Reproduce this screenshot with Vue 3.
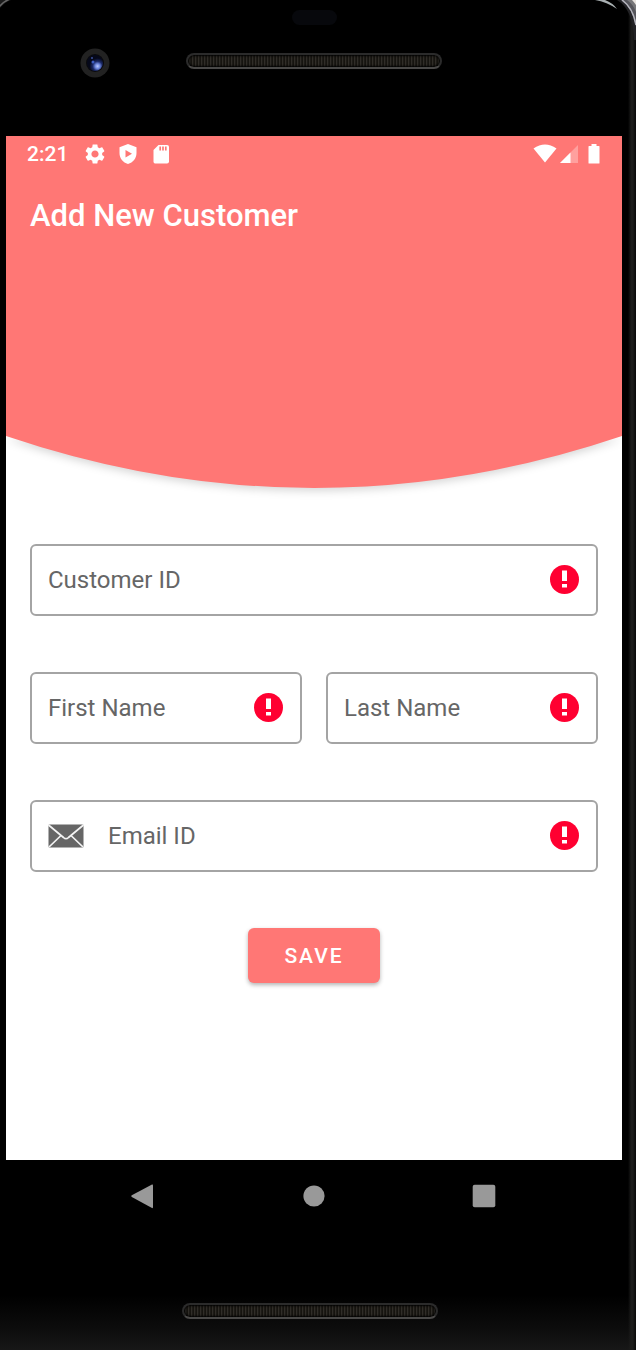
<script setup>
import { reactive } from 'vue'

const form = reactive({ customerId: '', firstName: '', lastName: '', email: '' })

const fields = [
  { key: 'customerId', label: 'Customer ID', type: 'text', wide: true },
  { key: 'firstName', label: 'First Name', type: 'text', wide: false },
  { key: 'lastName', label: 'Last Name', type: 'text', wide: false },
  { key: 'email', label: 'Email ID', type: 'email', wide: true, mail: true },
]
</script>

<template>
  <div class="phone">
    <svg class="corner left" viewBox="0 0 24 36" aria-hidden="true">
      <path d="M0 0H11Q5 2 0 8Z" fill="#1c1c1c" />
      <path d="M-1 7Q4 1 10 -1" fill="none" stroke="#666" stroke-width="1.5" />
    </svg>
    <svg class="corner right" viewBox="0 0 60 40" aria-hidden="true">
      <path d="M19 0H29Q37 3 41 9Q31 2 19 0Z" fill="#a9b0b2" />
      <path d="M41 0Q57 9 58 40H60V0Z" fill="#222225" />
      <path d="M45 0H60V26Q56 7 45 0Z" fill="#55555b" />
      <path d="M46 0Q57 8 60 25" fill="none" stroke="#b5b5bd" stroke-width="1.5" />
      <path d="M51 0H60V12Q57 4 51 0Z" fill="#77777a" />
      <path d="M56 0H60V5Q58 2 56 0Z" fill="#e8e4df" />
    </svg>

    <div class="bezel top">
      <svg class="camera" viewBox="0 0 30 30" aria-hidden="true">
        <defs>
          <radialGradient id="glint" cx="0.66" cy="0.7" r="0.5">
            <stop offset="0" stop-color="#bccbff" />
            <stop offset="0.3" stop-color="#6d86dc" />
            <stop offset="0.6" stop-color="#1c2a68" />
            <stop offset="1" stop-color="#05081a" />
          </radialGradient>
        </defs>
        <circle cx="15" cy="15" r="14.5" fill="#222" />
        <circle cx="15" cy="15" r="9" fill="#0a0a0c" />
        <circle cx="15" cy="15" r="8" fill="url(#glint)" />
        <circle cx="13" cy="14" r="1.5" fill="#3d5dc0" />
        <circle cx="12" cy="10" r="1" fill="#3a4f9a" />
      </svg>
      <div class="sensor"></div>
      <div class="speaker"></div>
    </div>

    <main class="screen">
      <header class="header">
        <div class="status">
          <span class="time">2:21</span>
          <svg class="sicon" viewBox="2 2 20 20" aria-hidden="true">
            <path fill="#fff" d="M19.14 12.94c.04-.3.06-.61.06-.94 0-.32-.02-.64-.07-.94l2.03-1.58c.18-.14.23-.41.12-.61l-1.92-3.32c-.12-.22-.37-.29-.59-.22l-2.39.96c-.5-.38-1.03-.7-1.62-.94l-.36-2.54c-.04-.24-.24-.41-.48-.41h-3.84c-.24 0-.43.17-.47.41l-.36 2.54c-.59.24-1.13.57-1.62.94l-2.39-.96c-.22-.08-.47 0-.59.22L2.74 8.87c-.12.21-.08.47.12.61l2.03 1.58c-.05.3-.09.63-.09.94s.02.64.07.94l-2.03 1.58c-.18.14-.23.41-.12.61l1.92 3.32c.12.22.37.29.59.22l2.39-.96c.5.38 1.03.7 1.62.94l.36 2.54c.05.24.24.41.48.41h3.84c.24 0 .44-.17.47-.41l.36-2.54c.59-.24 1.13-.56 1.62-.94l2.39.96c.22.08.47 0 .59-.22l1.92-3.32c.12-.22.07-.47-.12-.61l-2.01-1.58zM12 15.6c-1.98 0-3.6-1.62-3.6-3.6s1.62-3.6 3.6-3.6 3.6 1.62 3.6 3.6-1.62 3.6-3.6 3.6z" />
          </svg>
          <svg class="sicon" viewBox="0 0 20 20" aria-hidden="true">
            <path fill="#fff" fill-rule="evenodd" d="M10 0L18.500 3.200V9C18.500 14.500 15 18.500 10 20C5 18.500 1.500 14.500 1.500 9V3.200ZM7.500 6V13.500L14 9.700Z" />
          </svg>
          <svg class="sicon" viewBox="0 0 20 20" aria-hidden="true">
            <path fill="#fff" d="M7.500 1H16Q18 1 18 3V17.500Q18 19.500 16 19.500H4Q2.500 19.500 2.500 17.500V6Z" />
            <path stroke="#ff7775" stroke-width="1.700" d="M9.200 2.500V6.500M12 2.500V6.500M14.800 2.500V6.500" />
          </svg>
          <span class="spacer"></span>
          <svg class="wifi" viewBox="0 0 24 20" aria-hidden="true">
            <path fill="#fff" d="M0.500 4.500Q12 -3.500 23.500 4.500L12 18.500Z" />
          </svg>
          <svg class="signal" viewBox="0 0 18 20" aria-hidden="true">
            <path fill="#fff" opacity="0.3" d="M0 19L18 1V19Z" />
            <path fill="#fff" d="M0 19L10.500 8.500V19Z" />
          </svg>
          <svg class="battery" viewBox="0 0 12 20" aria-hidden="true">
            <path fill="#fff" d="M3.500 0H8.500V2H11Q11.500 2 11.500 2.700V19Q11.500 19.500 11 19.500H1Q0.500 19.500 0.500 19V2.700Q0.500 2 1 2H3.500Z" />
          </svg>
        </div>
        <h1 class="title">Add New Customer</h1>
      </header>
      <svg class="curve" viewBox="0 0 616 52" preserveAspectRatio="none" aria-hidden="true">
        <path fill="#ff7775" d="M0 0H616Q308 104 0 0Z" />
      </svg>

      <form class="form" @submit.prevent>
        <div v-for="f in fields" :key="f.key" class="field" :class="{ wide: f.wide, filled: form[f.key] }">
          <svg v-if="f.mail" class="mail" viewBox="0 0 36 24" aria-hidden="true">
            <rect x="0.500" y="0.500" width="35" height="23" rx="1" fill="#666" />
            <path fill="none" stroke="#f4f4f4" stroke-width="1.700" d="M0.500 1L15.500 13.500Q18 16 20.500 13.500L35.500 1M1 23L13 11.500M35 23L23 11.500" />
          </svg>
          <div class="entry">
            <label :for="f.key">{{ f.label }}</label>
            <input :id="f.key" v-model="form[f.key]" :type="f.type" />
          </div>
          <svg class="alert" viewBox="0 0 30 30" aria-hidden="true">
            <circle cx="14.500" cy="14.500" r="14.500" fill="#ff0031" />
            <path fill="#fff" d="M12 5.500H17V16H12ZM12 19H17V22.500H12Z" />
          </svg>
        </div>
        <button class="save" type="submit">SAVE</button>
      </form>
    </main>

    <nav class="nav">
      <button type="button" aria-label="Back">
        <svg viewBox="0 0 24 24"><path fill="#999" d="M20 0.500Q21 0 21 1.500V23Q21 24.500 20 24L-0.200 13Q-1.500 12 -0.200 11.300Z" /></svg>
      </button>
      <button type="button" aria-label="Home">
        <svg viewBox="0 0 24 24"><circle cx="12" cy="12" r="10.600" fill="#999" /></svg>
      </button>
      <button type="button" aria-label="Recent apps">
        <svg viewBox="0 0 24 24"><rect x="0.700" y="0.700" width="22.600" height="22.600" rx="2" fill="#999" /></svg>
      </button>
    </nav>

    <div class="bezel bottom">
      <div class="speaker"></div>
    </div>
  </div>
</template>

<style>
body {
  background: #000;
}
</style>

<style scoped>
* {
  box-sizing: border-box;
}

.phone {
  position: relative;
  display: flex;
  flex-direction: column;
  min-height: 100vh;
  padding: 0 14px 0 6px;
  overflow: hidden;
  font-family: Roboto, "Liberation Sans", sans-serif;
  background:
    linear-gradient(to right, transparent, #1c1c1b 40%, #1c1c1b 60%, #080808) right / 8px 100% no-repeat,
    linear-gradient(to top, #181818, #0c0c0c 24px, transparent 56px),
    #000;
}

.corner {
  position: absolute;
  top: 0;
}

.corner.left {
  left: 0;
  width: 24px;
  height: 36px;
}

.corner.right {
  right: 0;
  width: 60px;
  height: 40px;
}

.bezel {
  position: relative;
  display: flex;
  flex-direction: column;
  align-items: center;
}

.top {
  height: 136px;
  padding-top: 10px;
  gap: 28px;
}

.bottom {
  flex: 1;
  padding: 71px 8px 32px 0;
}

.camera {
  position: absolute;
  left: 74px;
  top: 48px;
  width: 30px;
  height: 30px;
}

.sensor {
  width: 45px;
  height: 15px;
  border-radius: 8px;
  background: #07080c;
}

.speaker {
  width: 256px;
  height: 16px;
  border: 2px solid #2b2b2b;
  border-bottom-color: #4a4948;
  border-radius: 8px;
  background: repeating-linear-gradient(to right, #16140f 0 1px, #302d28 1px 2px, #1d1b17 2px 3px);
  box-shadow: inset 0 0 2px 1px #000;
}

.screen {
  min-height: 1024px;
  overflow: hidden;
  background: #fff;
}

.header {
  position: relative;
  z-index: 1;
  height: 300px;
  background: #ff7775;
  color: #fff;
}

.status {
  display: flex;
  align-items: center;
  height: 36px;
  padding: 0 22px 0 21px;
}

.time {
  margin-right: 17px;
  font-size: 21px;
  line-height: 24px;
  font-weight: 500;
}

.sicon {
  width: 20px;
  height: 20px;
  margin-right: 13px;
}

.spacer {
  flex: 1;
}

.wifi {
  width: 24px;
  height: 20px;
  margin-right: 3px;
}

.signal {
  width: 18px;
  height: 20px;
  margin-right: 10px;
}

.battery {
  width: 12px;
  height: 20px;
}

.title {
  margin: 26px 24px 0;
  font-size: 31px;
  line-height: 36px;
  font-weight: 500;
}

.curve {
  display: block;
  width: 100%;
  height: 52px;
  overflow: visible;
  filter: drop-shadow(0 3px 4px rgba(0, 0, 0, 0.16));
}

.form {
  display: grid;
  grid-template-columns: 1fr 1fr;
  gap: 56px 24px;
  padding: 56px 24px;
}

.field {
  display: flex;
  align-items: center;
  min-width: 0;
  height: 72px;
  padding: 0 16px;
  border: 2px solid #a4a4a4;
  border-radius: 6px;
}

.wide {
  grid-column: span 2;
}

.entry {
  display: grid;
  flex: 1;
  min-width: 0;
}

.entry label,
.entry input {
  grid-area: 1 / 1;
  min-width: 0;
  font-size: 24px;
  line-height: 30px;
}

.entry label {
  color: #666;
  pointer-events: none;
}

.filled label {
  visibility: hidden;
}

.entry input {
  width: 100%;
  height: 30px;
  padding: 0;
  border: 0;
  outline: 0;
  background: transparent;
  color: #222;
  font-family: inherit;
}

.mail {
  width: 36px;
  height: 24px;
  margin-right: 24px;
}

.alert {
  width: 30px;
  height: 30px;
}

.save {
  grid-column: span 2;
  justify-self: center;
  width: 132px;
  height: 55px;
  padding: 0;
  border: 0;
  border-radius: 6px;
  background: #ff7775;
  box-shadow: 0 2px 4px rgba(0, 0, 0, 0.3);
  color: #fff;
  font-family: inherit;
  font-size: 21px;
  font-weight: 500;
  letter-spacing: 2px;
}

.nav {
  display: flex;
  justify-content: center;
  height: 72px;
  gap: 122px;
}

.nav button {
  display: flex;
  align-items: center;
  justify-content: center;
  width: 48px;
  padding: 0;
  border: 0;
  background: transparent;
}

.nav svg {
  width: 24px;
  height: 24px;
  overflow: visible;
}
</style>
